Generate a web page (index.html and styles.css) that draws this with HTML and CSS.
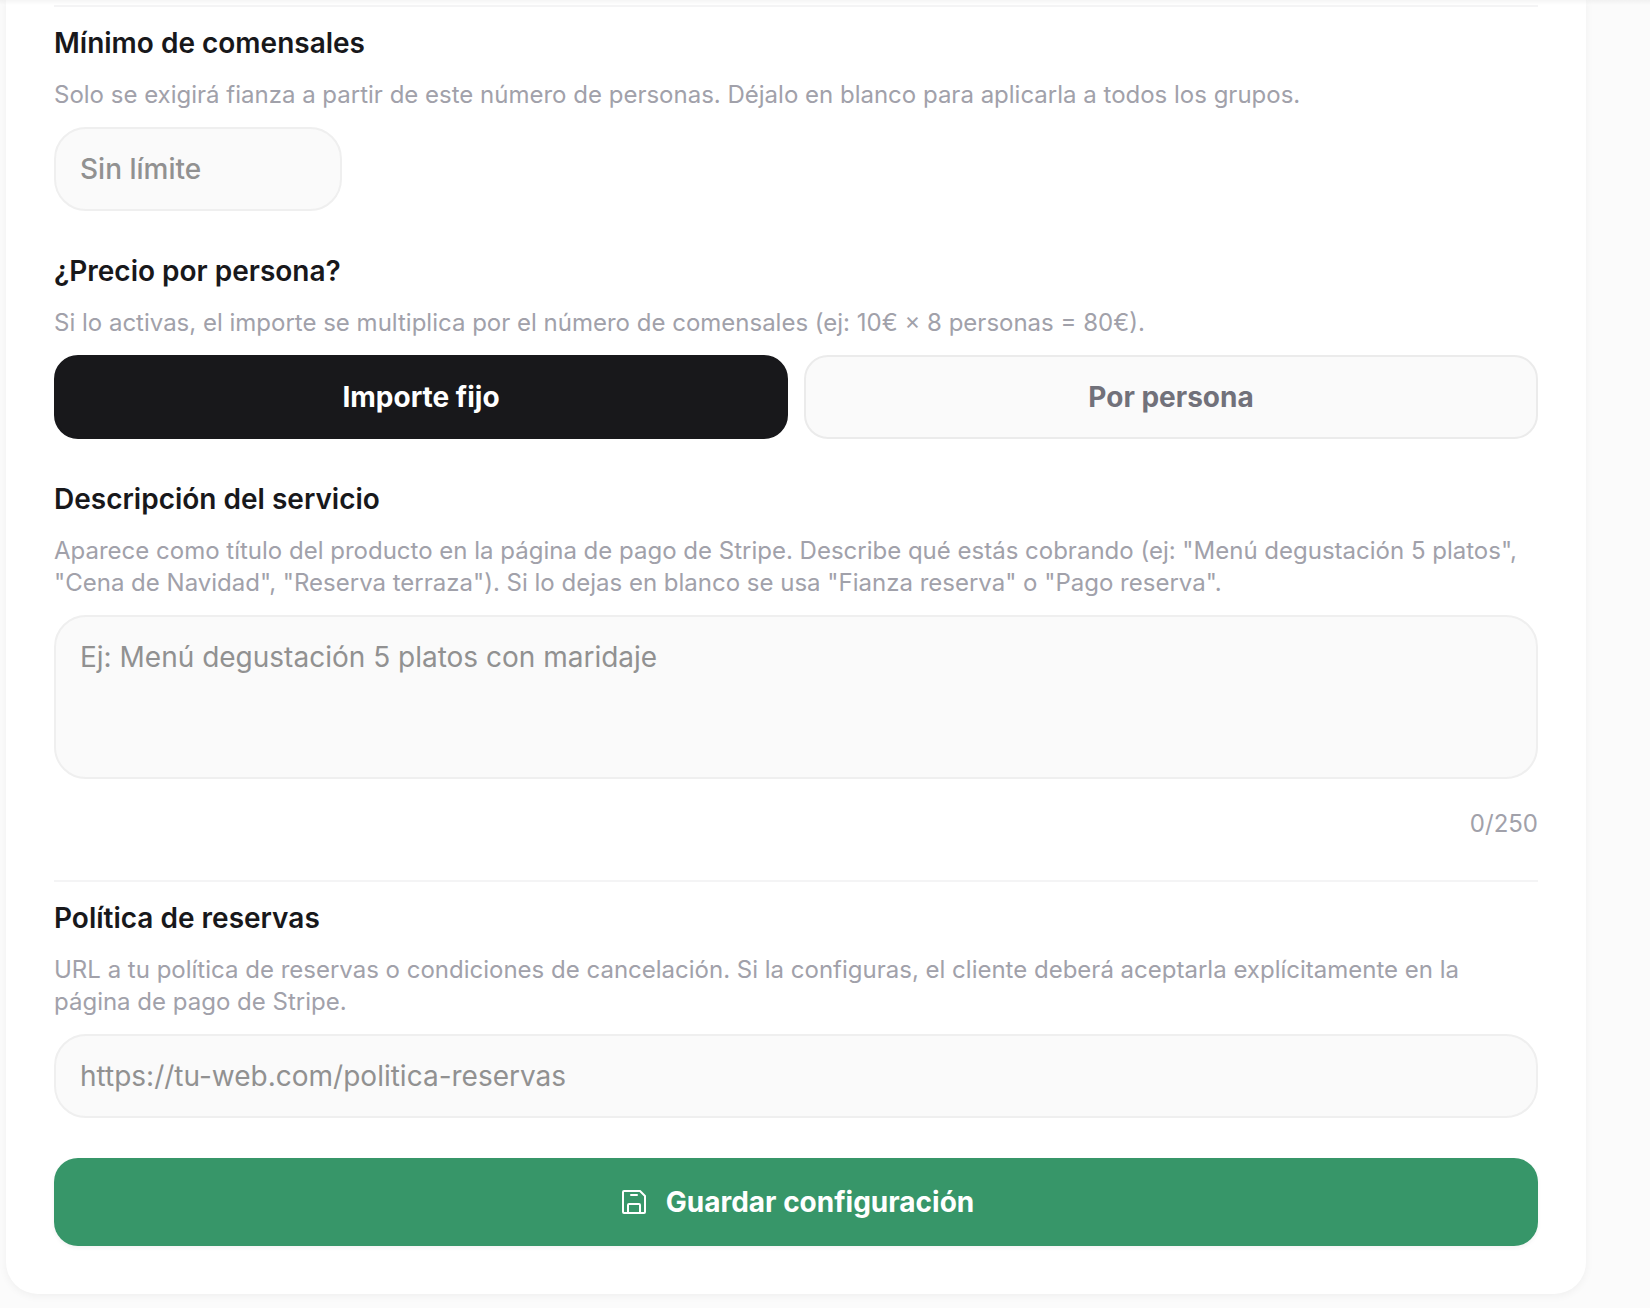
FILE: index.html
```
<!DOCTYPE html>
<html lang="es">
<head>
  <meta charset="utf-8">
  <meta name="viewport" content="width=device-width, initial-scale=1">
  <title>Configuración de reservas</title>
  <link rel="stylesheet" href="styles.css">
</head>
<body>
  <div class="header-shadow"></div>
  <main class="page">
    <form class="card">
      <section class="section">
        <div class="field">
          <label class="label" for="minimo">Mínimo de comensales</label>
          <p class="help">Solo se exigirá fianza a partir de este número de personas. Déjalo en blanco para aplicarla a todos los grupos.</p>
          <input class="control control-short" id="minimo" type="text" inputmode="numeric" placeholder="Sin límite">
        </div>
        <div class="field" role="group" aria-labelledby="precio">
          <h3 class="label" id="precio">¿Precio por persona?</h3>
          <p class="help">Si lo activas, el importe se multiplica por el número de comensales (ej: 10€ × 8 personas = 80€).</p>
          <div class="options">
            <button class="option option-active" type="button" aria-pressed="true">Importe fijo</button>
            <button class="option" type="button" aria-pressed="false">Por persona</button>
          </div>
        </div>
        <div class="field">
          <label class="label" for="descripcion">Descripción del servicio</label>
          <p class="help">Aparece como título del producto en la página de pago de Stripe. Describe qué estás cobrando (ej: "Menú degustación 5 platos", "Cena de Navidad", "Reserva terraza"). Si lo dejas en blanco se usa "Fianza reserva" o "Pago reserva".</p>
          <textarea class="control control-area" id="descripcion" rows="3" maxlength="250" placeholder="Ej: Menú degustación 5 platos con maridaje"></textarea>
          <p class="help counter">0/250</p>
        </div>
      </section>
      <section class="section">
        <div class="field">
          <label class="label" for="politica">Política de reservas</label>
          <p class="help">URL a tu política de reservas o condiciones de cancelación. Si la configuras, el cliente deberá aceptarla explícitamente en la página de pago de Stripe.</p>
          <input class="control" id="politica" type="url" placeholder="https://tu-web.com/politica-reservas">
        </div>
      </section>
      <button class="save" type="submit">
        <svg class="save-icon" viewBox="-2 -2 32 32" fill="none" stroke="currentColor" stroke-width="2" stroke-linecap="round" stroke-linejoin="round" aria-hidden="true">
          <path d="M4 3H20L25 8V24a1 1 0 0 1-1 1H4a1 1 0 0 1-1-1V4a1 1 0 0 1 1-1Z"/>
          <path d="M8 25V17a1 1 0 0 1 1-1H19a1 1 0 0 1 1 1V25"/>
          <path d="M11 7H17"/>
        </svg>
        Guardar configuración
      </button>
    </form>
  </main>
</body>
</html>
```
FILE: styles.css
```
* {
  box-sizing: border-box;
}

body {
  margin: 0;
  background: #fbfbfb;
  color: #18181b;
  font-family: Inter, "Liberation Sans", sans-serif;
  font-size: 28px;
  line-height: 40px;
}

.header-shadow {
  position: absolute;
  top: 0;
  left: 0;
  right: 0;
  height: 5px;
  background: linear-gradient(rgba(0, 0, 0, 0.04), rgba(0, 0, 0, 0));
}

.page {
  padding: 0 64px 14px 6px;
}

.card {
  display: flex;
  flex-direction: column;
  gap: 40px;
  padding: 5px 48px 48px;
  border-radius: 0 0 32px 32px;
  background: #fff;
  box-shadow: 0 2px 8px rgba(0, 0, 0, 0.05);
}

.section {
  display: flex;
  flex-direction: column;
  gap: 40px;
  padding-top: 16px;
  border-top: 2px solid #f4f4f5;
}

.field {
  display: flex;
  flex-direction: column;
  gap: 16px;
}

.label {
  margin: 0;
  font-size: 28px;
  font-weight: 600;
}

.help {
  margin: 0;
  color: #a1a1aa;
  font-size: 24px;
  line-height: 32px;
}

.counter {
  margin-top: 13px;
  text-align: right;
}

.control {
  display: block;
  width: 100%;
  margin: 0;
  padding: 20px 24px;
  border: 2px solid #efefef;
  border-radius: 32px;
  background: #fafafa;
  color: #18181b;
  font: inherit;
  height: 84px;
}

.control::placeholder {
  color: #919191;
  opacity: 1;
}

.control-short {
  width: 288px;
  font-weight: 500;
}

.control-area {
  height: auto;
  resize: none;
}

.options {
  display: grid;
  grid-template-columns: 1fr 1fr;
  gap: 16px;
}

.option,
.save {
  margin: 0;
  font: inherit;
  font-weight: 700;
  border-radius: 24px;
  cursor: pointer;
}

.option {
  padding: 20px;
  border: 2px solid #ebebeb;
  background: #fafafa;
  color: #71717a;
}

.option-active {
  border-color: #18181b;
  background: #18181b;
  color: #fff;
}

.save {
  display: flex;
  align-items: center;
  justify-content: center;
  gap: 16px;
  padding: 24px;
  border: 0;
  background: #379669;
  color: #fff;
  box-shadow: 0 2px 4px rgba(0, 0, 0, 0.05);
}

.save-icon {
  width: 32px;
  height: 32px;
}
```
